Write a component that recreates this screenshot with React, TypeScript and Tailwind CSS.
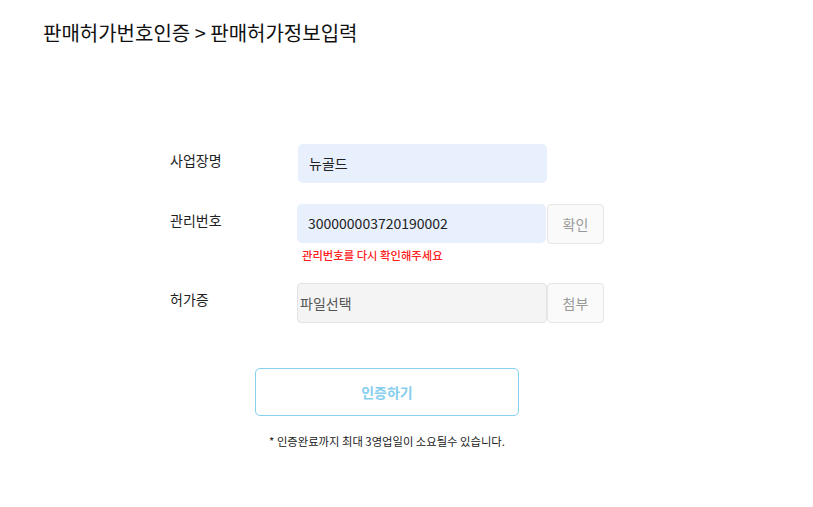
import React from 'react'

const font = { fontFamily: '"Noto Sans CJK KR", "Noto Sans", sans-serif' }

export default function App() {
  return (
    <div className="w-[813px] h-[507px] bg-white text-[#222]" style={font}>
      <h1 className="pt-[19px] pl-[43px] text-[20px] leading-[28px] font-normal text-[#111]">
        판매허가번호인증 &gt; 판매허가정보입력
      </h1>

      <div className="ml-[170px] mt-[97px] w-[434px]">
        {/* 사업장명 */}
        <div className="flex items-start">
          <div className="w-[128px] pt-[6px] text-[14px] leading-[20px]">사업장명</div>
          <div className="w-[249px] h-[39px] rounded-[5px] bg-[#e8f0fe] px-[11px] flex items-center text-[14px]">
            뉴골드
          </div>
        </div>

        {/* 관리번호 */}
        <div className="mt-[21px] flex items-start">
          <div className="w-[127px] pt-[6px] text-[14px] leading-[20px]">관리번호</div>
          <div>
            <div className="flex">
              <div className="w-[249px] h-[39px] rounded-[5px] bg-[#e8f0fe] px-[11px] flex items-center text-[14px]">
                300000003720190002
              </div>
              <button className="ml-[1px] w-[57px] h-[40px] rounded-[4px] border border-[#e6e6e6] bg-[#fafafa] text-[14px] text-[#999]">
                확인
              </button>
            </div>
            <p className="mt-[3px] pl-[5px] text-[11.33px] leading-[16px] font-medium text-[#ff2020]">관리번호를 다시 확인해주세요</p>
          </div>
        </div>

        {/* 허가증 */}
        <div className="mt-[20px] flex items-start">
          <div className="w-[127px] pt-[6px] text-[14px] leading-[20px]">허가증</div>
          <div className="flex">
            <div className="w-[250px] h-[40px] rounded-[4px] border border-[#e4e4e4] bg-[#f4f4f4] pl-[2px] flex items-center text-[14px] text-[#555]">
              파일선택
            </div>
            <button className="w-[57px] h-[40px] rounded-[4px] border border-[#e6e6e6] bg-[#fafafa] text-[14px] text-[#999]">
              첨부
            </button>
          </div>
        </div>

        <div className="mt-[45px] flex flex-col items-center">
          <button className="w-[264px] h-[48px] rounded-[5px] border border-[#86d0f0] bg-white text-[14px] font-bold text-[#86cdee]">
            인증하기
          </button>
          <p className="mt-[17px] text-[11.33px] leading-[16px] text-[#222]">
            * 인증완료까지 최대 3영업일이 소요될수 있습니다.
          </p>
        </div>
      </div>
    </div>
  )
}
